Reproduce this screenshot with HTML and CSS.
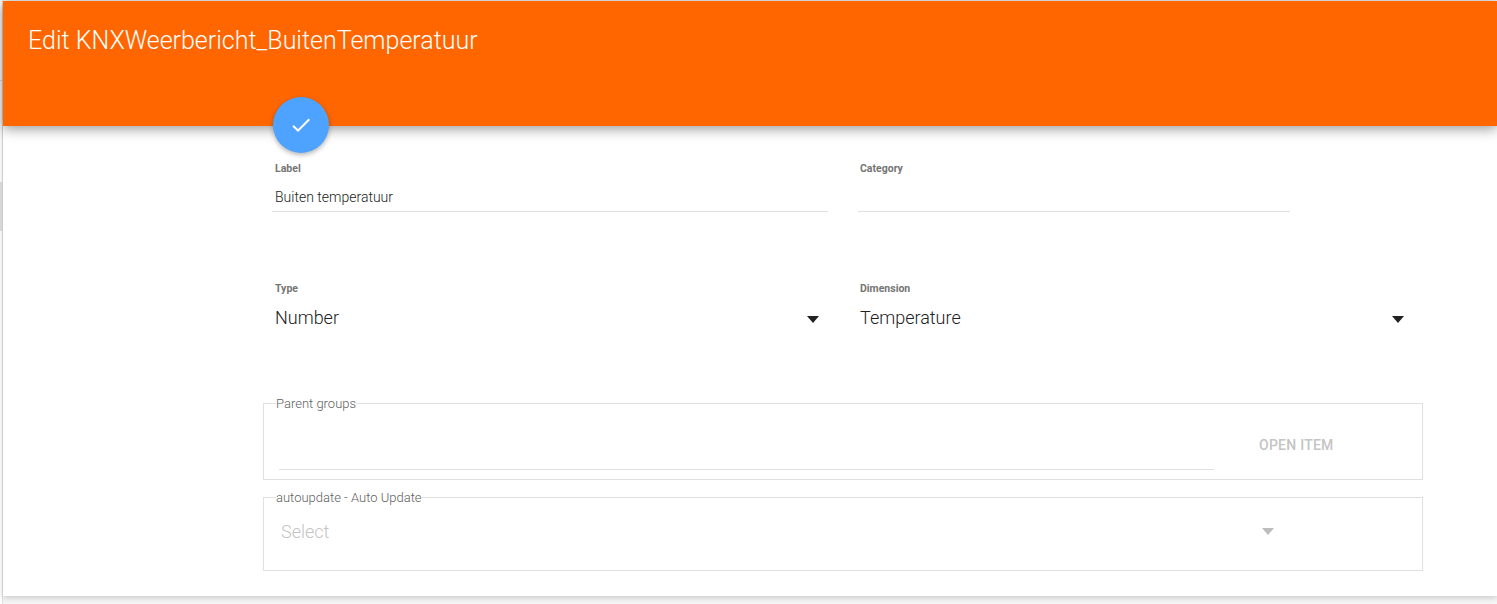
FILE: index.html
```html
<!DOCTYPE html>
<html lang="nl">
<head>
<meta charset="utf-8">
<title>Edit KNXWeerbericht_BuitenTemperatuur</title>
<link rel="stylesheet" href="styles.css">
</head>
<body>
<div class="page">
  <div class="strip"><div class="strip-line"></div><div class="strip-block"></div></div>
  <main class="dialog">
    <header class="head">
      <h1 class="title">Edit KNXWeerbericht_BuitenTemperatuur</h1>
      <button class="fab" type="button" aria-label="Save">
        <svg class="fab-icon" viewBox="0 0 24 24" width="24" height="24"><path d="M9 16.17 4.83 12l-1.42 1.41L9 19 21 7l-1.41-1.41z" fill="#fff"/></svg>
      </button>
    </header>
    <div class="body">
      <div class="row row-text">
        <div class="field field-label">
          <label class="cap">Label</label>
          <div class="value value-small">Buiten temperatuur</div>
        </div>
        <div class="field field-category">
          <label class="cap">Category</label>
          <div class="value value-small"></div>
        </div>
      </div>
      <div class="row row-select">
        <div class="field field-label">
          <label class="cap">Type</label>
          <div class="select"><span>Number</span><i class="arrow"></i></div>
        </div>
        <div class="field field-dimension">
          <label class="cap">Dimension</label>
          <div class="select"><span>Temperature</span><i class="arrow"></i></div>
        </div>
      </div>
      <fieldset class="box box-parent">
        <legend class="legend">Parent groups</legend>
        <div class="parent-input"></div>
        <span class="open">OPEN ITEM</span>
      </fieldset>
      <fieldset class="box box-auto">
        <legend class="legend">autoupdate - Auto Update</legend>
        <div class="auto-select"><span>Select</span><i class="arrow arrow-dim"></i></div>
      </fieldset>
    </div>
  </main>
</div>
</body>
</html>
```

FILE: styles.css
```css
* { box-sizing: border-box; }
html, body { margin: 0; height: 100%; overflow: hidden; background: #f6f6f6; }
body { font-family: Roboto, "Liberation Sans", sans-serif; }
.page { display: flex; height: 604px; }
.strip { width: 3px; height: 604px; background: #fff; border-right: 1px solid #e0e0e0; padding-top: 80px; flex: none; }
.strip-line { height: 1px; background: #e0e0e0; margin-bottom: 101px; }
.strip-block { height: 49px; background: #e0e0e0; }
.dialog { flex: 1; height: 595px; margin-top: 1px; background: #fff; box-shadow: 0 2px 6px rgba(0,0,0,.18); display: flex; flex-direction: column; }
.head { position: relative; height: 125px; background: #ff6600; padding: 25px 25px 0; box-shadow: 0 3px 12px rgba(0,0,0,.4); flex: none; }
.title { margin: 0; font-size: 25px; line-height: 30px; font-weight: 300; color: #fff; }
.fab { position: absolute; left: 270px; top: 96px; width: 56px; height: 56px; border: 0; padding: 16px; border-radius: 50%; background: #4da3ff; box-shadow: 0 2px 5px rgba(0,0,0,.3); display: flex; }
.body { padding: 0 0 0 260px; flex: 1; }
.row { display: flex; }
.row-text { padding-top: 36px; height: 156px; gap: 30px; padding-left: 9px; }
.row-select { height: 114px; gap: 29px; padding-left: 9px; }
.field-label { width: 556px; }
.field-category { width: 432px; }
.field-dimension { width: 556px; }
.cap { display: block; height: 14px; padding-left: 3px; font-size: 10.5px; line-height: 14px; font-weight: 700; color: #757575; }
.field-category .cap { padding-left: 2px; }
.value { height: 36px; border-bottom: 1px solid #e0e0e0; padding: 11px 0 0 3px; font-size: 14px; line-height: 20px; font-weight: 300; color: #212121; }
.select { display: flex; justify-content: space-between; align-items: center; height: 40px; padding: 2px 9px 0 3px; font-size: 18px; font-weight: 300; color: #212121; }
.arrow { width: 0; height: 0; border-style: solid; border-width: 7px 6.5px 0; border-color: #212121 transparent transparent; margin-top: 4px; }
.arrow-dim { border-top-color: #bdbdbd; margin: 0; }
.box { margin: 0; border: 1px solid #e0e0e0; padding: 0; width: 1160px; min-width: 0; position: relative; }
.legend { margin-left: 12px; padding: 0; font-size: 13px; line-height: 15px; font-weight: 300; color: #616161; }
.box-parent { height: 84px; display: flex; }
.parent-input { position: absolute; left: 15px; top: 58px; width: 935px; border-bottom: 1px solid #e0e0e0; }
.open { position: absolute; left: 995px; top: 26px; font-size: 14px; line-height: 16px; font-weight: 500; letter-spacing: .25px; color: #c4c4c4; }
.box-auto { margin-top: 10px; height: 81px; }
.auto-select { display: flex; justify-content: space-between; align-items: center; height: 40px; margin-top: 6px; padding: 0 148px 0 17px; font-size: 18px; font-weight: 300; color: #c4c4c4; }
```
